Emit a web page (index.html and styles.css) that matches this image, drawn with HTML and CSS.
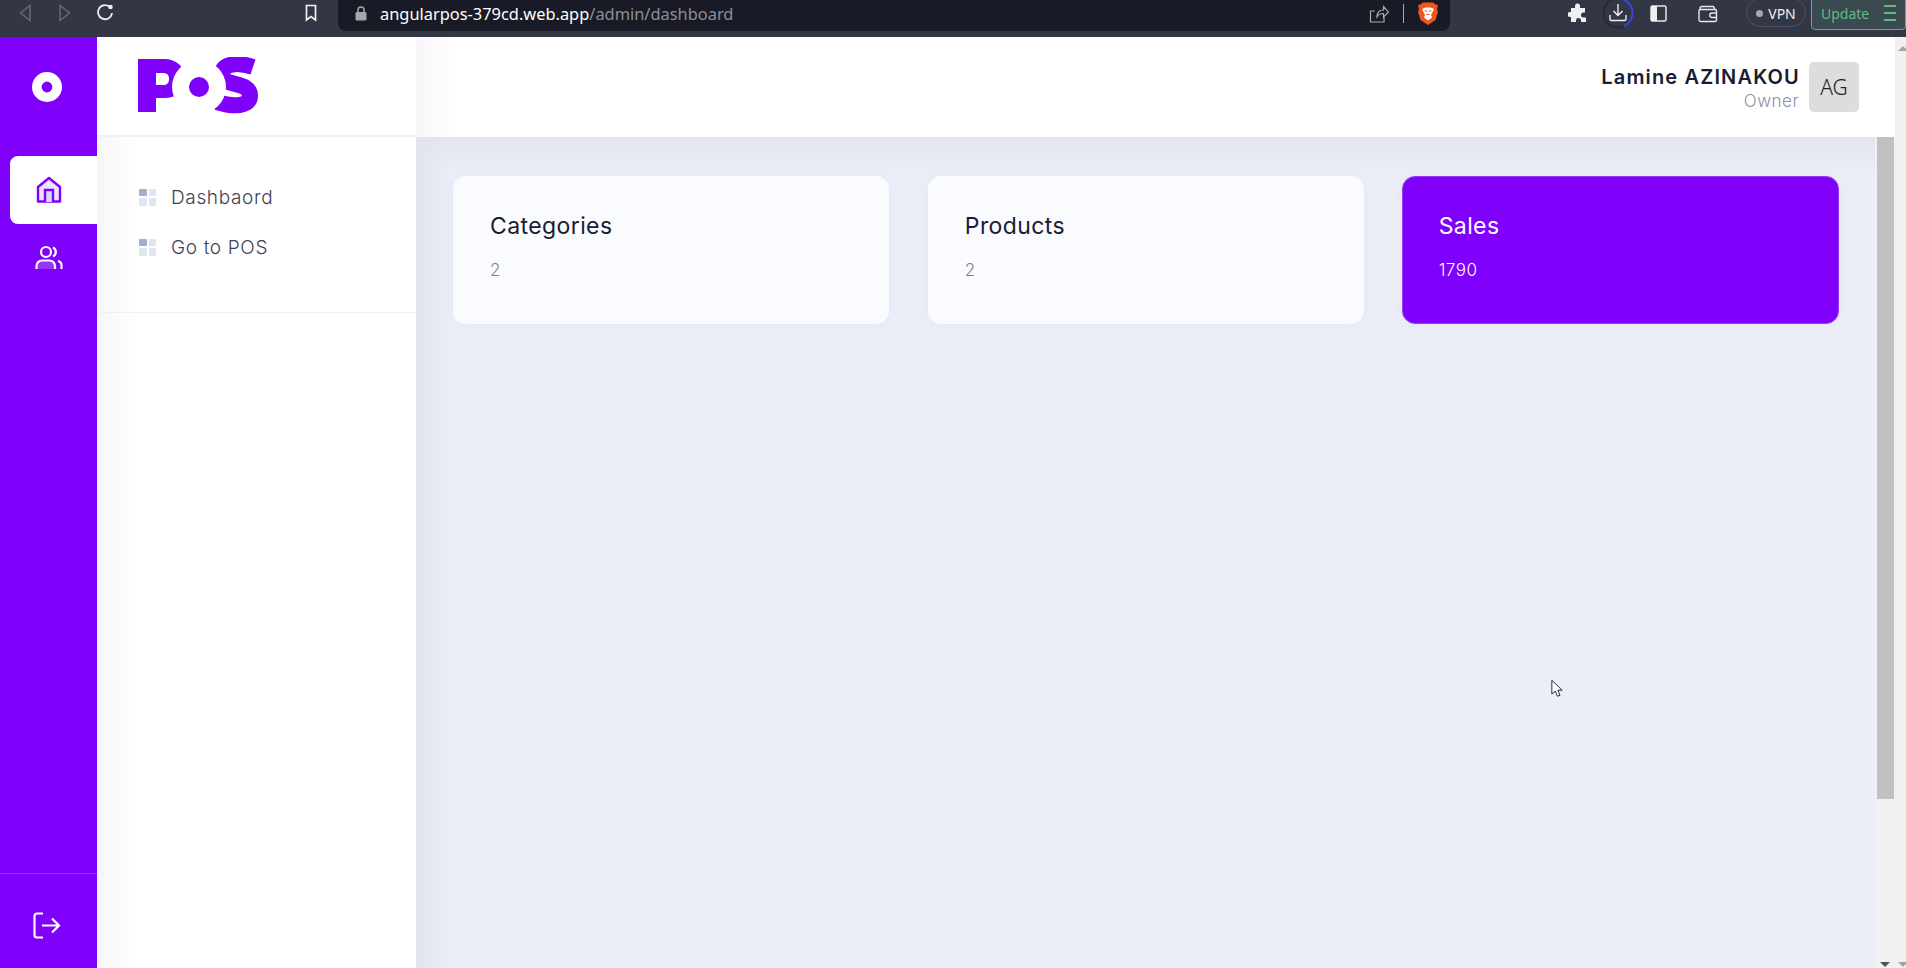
FILE: index.html
```html
<!DOCTYPE html>
<html lang="en">
<head>
    <meta charset="UTF-8">
    <title>POS Dashboard</title>
    <link rel="stylesheet" href="styles.css">
</head>
<body>
    <div class="browser-bar">
        <svg class="nav-back" width="12" height="18" viewBox="0 0 12 18"><path d="M11 1.5V16.500L1.500 9Z" fill="none" stroke="#666a75" stroke-width="1.500"/></svg>
        <svg class="nav-forward" width="12" height="18" viewBox="0 0 12 18"><path d="M1 1.500V16.500L10.500 9Z" fill="none" stroke="#666a75" stroke-width="1.500"/></svg>
        <svg class="nav-reload" width="18" height="18" viewBox="0 0 18 18"><path d="M14.500 3.800A7 7 0 1 0 16 9" fill="none" stroke="#eeeeee" stroke-width="1.800"/><circle cx="14.500" cy="3" r="2.300" fill="#eeeeee"/></svg>
        <svg class="nav-bookmark" width="12" height="18" viewBox="0 0 12 18"><path d="M1.500 1.500H10.500V16L6 12.500 1.500 16Z" fill="none" stroke="#f0f0f0" stroke-width="1.700"/></svg>
        <div class="url-bar">
            <svg class="url-lock" width="12" height="15" viewBox="0 0 12 15"><path d="M3 6V4a3 3 0 0 1 6 0v2" fill="none" stroke="#a5a7ad" stroke-width="1.500"/><rect x="0.500" y="6" width="11" height="8.500" rx="1.500" fill="#a5a7ad"/></svg>
            <span class="url-text"><span class="url-host">angularpos-379cd.web.app</span>/admin/dashboard</span>
            <svg class="url-share" width="20" height="20" viewBox="0 0 20 20"><path d="M15 12v6H1.500V7H6M8 13c0-5 3-7 6.500-7V2.500L19.500 8l-5 5V9.500C11.500 9.500 9.500 10.500 8 13Z" fill="none" stroke="#a9abb1" stroke-width="1.200"/></svg>
            <span class="url-sep"></span>
            <svg class="url-brave" width="20" height="23" viewBox="0 0 20 23"><path d="M5 0.500H15L17.500 2.500 20 3 19 8 20 10 17.500 18 10 23 2.500 18 0 10 1 8 0 3 2.500 2.500Z" fill="#f1561f"/><path d="M4 7L7.500 5.500H12.500L16 7 13 13 14 15.500 10 18.500 6 15.500 7 13Z" fill="#ffffff"/><path d="M6.500 9H9M11 9H13.500M8.500 12.500H11.500" stroke="#f1561f" stroke-width="1.200"/></svg>
        </div>
        <svg class="tool-puzzle" width="20" height="20" viewBox="0 0 20 20"><path d="M7 3a2.500 2.500 0 0 1 5 0V5h5v4.500h-1.500a2.500 2.500 0 0 0 0 5H18V19H13v-1.500a2.500 2.500 0 0 0-5 0V19H3v-5H2a2.500 2.500 0 0 1 0-5h1V5h4Z" fill="#f0f0f0"/></svg>
        <svg class="tool-download" width="32" height="32" viewBox="0 0 32 32"><circle cx="16" cy="14" r="14.500" fill="none" stroke="#272a36" stroke-width="2"/><path d="M16 -0.500A14.500 14.500 0 0 1 22 27.200" fill="none" stroke="#3c46e6" stroke-width="2"/><path d="M16 5V16M11.500 12L16 16.500 20.500 12M8 16v4a1.500 1.500 0 0 0 1.500 1.500h13A1.500 1.500 0 0 0 24 20v-4" fill="none" stroke="#f0f0f0" stroke-width="1.400"/></svg>
        <svg class="tool-panel" width="17" height="17" viewBox="0 0 17 17"><rect x="1" y="1" width="15" height="15" rx="1.500" fill="none" stroke="#e8e8e8" stroke-width="1.500"/><rect x="1" y="1" width="6" height="15" fill="#f0f0f0"/></svg>
        <svg class="tool-wallet" width="20" height="18" viewBox="0 0 20 18"><path d="M2 5V3.500A2 2 0 0 1 4 1.500H15.500L17 4.500M1 5.500A1.500 1.500 0 0 1 2.500 4.500H17A1.500 1.500 0 0 1 18.500 6V15A1.500 1.500 0 0 1 17 16.500H3A2 2 0 0 1 1 14.500Z M18.500 8H14A2 2 0 0 0 14 12.500H18.500" fill="none" stroke="#e8e8e8" stroke-width="1.400"/></svg>
        <div class="vpn-pill"><span class="vpn-dot"></span>VPN</div>
        <div class="update-box">
            <span>Update</span>
            <span class="update-menu"><i></i><i></i><i></i></span>
        </div>
    </div>

    <div class="app">
        <aside class="rail">
            <div class="rail-logo">
                <svg width="30" height="30" viewBox="0 0 30 30"><circle cx="15" cy="15" r="10.200" fill="none" stroke="#ffffff" stroke-width="9.600"/></svg>
            </div>
            <div class="rail-item active">
                <svg width="26" height="28" viewBox="0 0 26 28"><path d="M2 11L13 2 24 11V25.500H2Z" fill="#e9e6ff" stroke="#7f00fb" stroke-width="2.400" stroke-linejoin="round"/><path d="M9 26V14H17V26" fill="#d6dcf6" stroke="#7f00fb" stroke-width="2.400"/></svg>
            </div>
            <div class="rail-item">
                <svg width="28" height="26" viewBox="0 0 28 26"><circle cx="11" cy="7" r="5" fill="none" stroke="#ffffff" stroke-width="2.200"/><path d="M18 2.500a5 5 0 0 1 0 9" fill="none" stroke="#ffffff" stroke-width="2.200"/><path d="M1.500 24V21a5.500 5.500 0 0 1 5.500-5.500h7.500A5.500 5.500 0 0 1 20 21v3" fill="#9a33fc" stroke="#ffffff" stroke-width="2.200"/><path d="M23 16a4.500 4.500 0 0 1 3.500 4.500V24" fill="none" stroke="#ffffff" stroke-width="2.200"/></svg>
            </div>
            <div class="rail-bottom">
                <svg width="28" height="27" viewBox="0 0 28 27"><path d="M10 1.500H4A2.500 2.500 0 0 0 1.500 4V23A2.500 2.500 0 0 0 4 25.500H10" fill="none" stroke="#ffffff" stroke-width="2.200"/><path d="M9 13.500H26M19 6.500L26 13.500 19 20.500" fill="none" stroke="#ffffff" stroke-width="2.200"/></svg>
            </div>
        </aside>

        <aside class="sidebar">
            <div class="sidebar-logo">
                <svg width="124" height="58" viewBox="136 57 124 58">
                    <path fill-rule="evenodd" d="M137 59H163C176 59 184 67 184 79C184 91 176 98 163 98H155V112H137ZM155 73V85H162C166 85 168 83 168 79C168 75 166 73 162 73Z" fill="#7f00fb"/>
                    <path d="M252 67C237 62 221 63 221 74C221 88 249 80 249 96C249 107 232 107 216 102" fill="none" stroke="#7f00fb" stroke-width="16"/>
                    <circle cx="198" cy="87" r="27" fill="#ffffff"/>
                    <circle cx="198" cy="87" r="10" fill="#7f00fb"/>
                </svg>
            </div>
            <nav class="side-nav">
                <a class="side-link"><span class="side-icon"><i class="on"></i><i></i><i></i><i></i></span>Dashbaord</a>
                <a class="side-link"><span class="side-icon"><i class="on"></i><i></i><i></i><i></i></span>Go to POS</a>
            </nav>
        </aside>

        <div class="content">
            <header class="topbar">
                <div class="user">
                    <div class="user-name">Lamine AZINAKOU</div>
                    <div class="user-role">Owner</div>
                </div>
                <div class="avatar">AG</div>
            </header>
            <div class="content-row">
                <main class="main">
                    <div class="card">
                        <h3>Categories</h3>
                        <p>2</p>
                    </div>
                    <div class="card">
                        <h3>Products</h3>
                        <p>2</p>
                    </div>
                    <div class="card card-sales">
                        <h3>Sales</h3>
                        <p>1790</p>
                    </div>
                </main>
                <div class="scroll-inner">
                    <div class="scroll-thumb"></div>
                    <span class="arrow-down"></span>
                </div>
            </div>
        </div>

        <div class="scroll-outer">
            <span class="arrow-up-light"></span>
            <span class="arrow-down-light"></span>
        </div>
    </div>

    <svg class="cursor" width="12" height="19" viewBox="0 0 14 21"><path d="M1 1V17L5 13.500 7.500 19.500 10.500 18.500 8 12.500H13Z" fill="#ffffff" stroke="#20222c" stroke-width="1.100"/></svg>
</body>
</html>
```

FILE: styles.css
```css
* {
    box-sizing: border-box;
}
html, body {
    height: 100%;
}
body {
    margin: 0;
    overflow: hidden;
    position: relative;
    font-family: Inter, 'Noto Sans', sans-serif;
    background-color: #ebeef7;
}

/* browser chrome */
.browser-bar {
    height: 37px;
    background-color: #333644;
    display: flex;
    align-items: flex-start;
    color: #f0f0f0;
    overflow: hidden;
}
.browser-bar > svg {
    flex: none;
}
.nav-back {
    margin: 4px 0 0 19px;
}
.nav-forward {
    margin: 4px 0 0 28px;
}
.nav-reload {
    margin: 4px 0 0 25px;
}
.nav-bookmark {
    margin: 4px 0 0 191px;
}
.url-bar {
    width: 1112px;
    height: 31px;
    margin-left: 21px;
    background-color: #181b25;
    border-radius: 0 0 8px 8px;
    display: flex;
    align-items: center;
    padding: 0 0 4px 17px;
    flex: none;
}
.url-lock {
    flex: none;
}
.url-text {
    margin-left: 13px;
    font-family: 'Noto Sans', sans-serif;
    font-size: 16.400px;
    color: #8c8e96;
    flex: 1;
    white-space: nowrap;
}
.url-host {
    color: #ffffff;
}
.url-share {
    flex: none;
}
.url-sep {
    width: 1px;
    height: 19px;
    background-color: #a9abb1;
    margin: 0 14px;
}
.url-brave {
    flex: none;
    margin-right: 12px;
}
.tool-puzzle {
    margin: 3px 0 0 118px;
}
.tool-download {
    margin: -1px 0 0 14px;
}
.tool-panel {
    margin: 5px 0 0 16px;
}
.tool-wallet {
    margin: 5px 0 0 31px;
}
.vpn-pill {
    width: 60px;
    height: 29px;
    margin: -2px 0 0 28px;
    border: 1.500px solid #4c5060;
    border-radius: 15px;
    display: flex;
    align-items: center;
    justify-content: center;
    gap: 5px;
    font-family: 'Noto Sans', sans-serif;
    font-size: 14px;
    padding-top: 2px;
    flex: none;
}
.vpn-dot {
    width: 7px;
    height: 7px;
    border-radius: 50%;
    background-color: #a5a7b2;
}
.update-box {
    width: 95px;
    height: 31px;
    margin: -1px 0 0 5px;
    border: 1.500px solid #5cb27b;
    border-radius: 0 0 4px 4px;
    background-color: #3a4a50;
    color: #5fbb80;
    font-family: 'Noto Sans', sans-serif;
    font-size: 14px;
    display: flex;
    align-items: center;
    justify-content: space-between;
    padding: 0 9px 3px 9px;
    flex: none;
}
.update-menu {
    display: flex;
    flex-direction: column;
    gap: 5px;
}
.update-menu i {
    display: block;
    width: 12px;
    height: 2px;
    background-color: #5fbb80;
}

/* app */
.app {
    height: 931px;
    display: flex;
}
.rail {
    width: 97px;
    flex: none;
    background-color: #7f00fb;
    display: flex;
    flex-direction: column;
    align-items: flex-end;
}
.rail-logo {
    width: 97px;
    height: 100px;
    margin-top: 0;
    display: flex;
    align-items: center;
    justify-content: center;
    padding-right: 3px;
}
.rail-item {
    width: 87px;
    height: 68px;
    margin-top: 19px;
    display: flex;
    align-items: center;
    justify-content: center;
    padding-right: 9px;
    border-radius: 8px 0 0 8px;
}
.rail-item.active {
    background-color: #ffffff;
}
.rail-item + .rail-item {
    margin-top: 0;
}
.rail-bottom {
    width: 97px;
    height: 95px;
    margin-top: auto;
    border-top: 1px solid #9433fc;
    display: flex;
    align-items: center;
    justify-content: center;
    padding: 8px 3px 0 0;
}
.sidebar {
    width: 319px;
    flex: none;
    background-color: #ffffff;
    display: flex;
    flex-direction: column;
}
.sidebar-logo {
    height: 100px;
    border-bottom: 2px solid #eff0f7;
    padding: 20px 0 0 40px;
}
.sidebar-logo svg {
    display: block;
}
.side-nav {
    height: 176px;
    padding-top: 35px;
    border-bottom: 1px solid #eff0f7;
    background: linear-gradient(90deg, #f6f6f9, #ffffff 40px);
}
.side-link {
    height: 50px;
    padding-left: 42px;
    display: flex;
    align-items: center;
    gap: 15px;
    font-size: 19px;
    font-weight: 300;
    letter-spacing: 0.650px;
    color: #3f4254;
}
.side-icon {
    display: grid;
    grid-template-columns: 7.500px 7.500px;
    grid-template-rows: 7.500px 7.500px;
    gap: 2px;
}
.side-icon i {
    background-color: #e1e5f0;
    border-radius: 1px;
}
.side-icon i.on {
    background-color: #a0aecf;
}
.sidebar::after {
    content: "";
    flex: 1;
    background: linear-gradient(90deg, #f6f6f9, #ffffff 40px);
}
.content {
    flex: 1;
    display: flex;
    flex-direction: column;
    min-width: 0;
}
.topbar {
    height: 100px;
    flex: none;
    background: linear-gradient(90deg, #f7f7fa, #ffffff 40px);
    display: flex;
    align-items: center;
    justify-content: flex-end;
    gap: 10px;
    padding-right: 36px;
}
.user {
    text-align: right;
    padding-top: 4px;
}
.user-name {
    font-size: 20px;
    font-weight: 600;
    letter-spacing: 1.150px;
    margin-right: -1px;
    color: #181c32;
    line-height: 24px;
}
.user-role {
    font-size: 17px;
    font-weight: 300;
    letter-spacing: 0.500px;
    color: #8f8fa8;
    line-height: 24px;
}
.avatar {
    width: 50px;
    height: 50px;
    border-radius: 5px;
    background-color: #dddddd;
    display: flex;
    align-items: center;
    justify-content: center;
    font-family: 'Noto Sans', sans-serif;
    font-weight: 300;
    font-size: 21px;
    color: #222222;
}
.content-row {
    flex: 1;
    display: flex;
    min-height: 0;
}
.main {
    flex: 1;
    padding: 39px 36px 0 37px;
    background:
        linear-gradient(90deg, #e2e4ef, rgba(235, 238, 247, 0) 36px),
        linear-gradient(180deg, #e2e4ef, #ebeef7 36px);
    display: grid;
    grid-template-columns: repeat(3, 1fr);
    column-gap: 38.500px;
    align-content: start;
}
.card {
    height: 148px;
    background-color: #fafbff;
    border-radius: 13px;
    padding: 37px;
    box-shadow: 0 0 12px rgba(120, 125, 170, 0.05);
}
.card h3 {
    margin: 0;
    font-size: 23px;
    line-height: 26px;
    font-weight: 400;
    letter-spacing: 0.400px;
    color: #181c32;
}
.card p {
    margin: 21px 0 0;
    font-size: 17px;
    line-height: 20px;
    font-weight: 300;
    letter-spacing: 0.500px;
    color: #7e7e95;
}
.card-sales {
    background-color: #7f00fb;
    border: 1px solid #9a3cf5;
    padding: 36px;
    margin-left: -1px;
}
.card-sales h3,
.card-sales p {
    color: #ffffff;
}
.scroll-inner {
    width: 20px;
    flex: none;
    background-color: #f1f1f1;
    position: relative;
    padding-left: 2px;
}
.scroll-thumb {
    width: 17px;
    height: 662px;
    background-color: #c1c1c1;
}
.arrow-down {
    position: absolute;
    left: 5px;
    bottom: 1px;
    border-left: 5px solid transparent;
    border-right: 5px solid transparent;
    border-top: 5px solid #505050;
}
.scroll-outer {
    width: 11px;
    flex: none;
    background-color: #f1f1f1;
    position: relative;
}
.arrow-up-light {
    position: absolute;
    left: 3px;
    top: 9px;
    border-left: 5px solid transparent;
    border-right: 5px solid transparent;
    border-bottom: 5px solid #a3a3a3;
}
.arrow-down-light {
    position: absolute;
    left: 3px;
    bottom: 1px;
    border-left: 5px solid transparent;
    border-right: 5px solid transparent;
    border-top: 5px solid #a3a3a3;
}
.cursor {
    position: absolute;
    left: 1551px;
    top: 679px;
}
```
